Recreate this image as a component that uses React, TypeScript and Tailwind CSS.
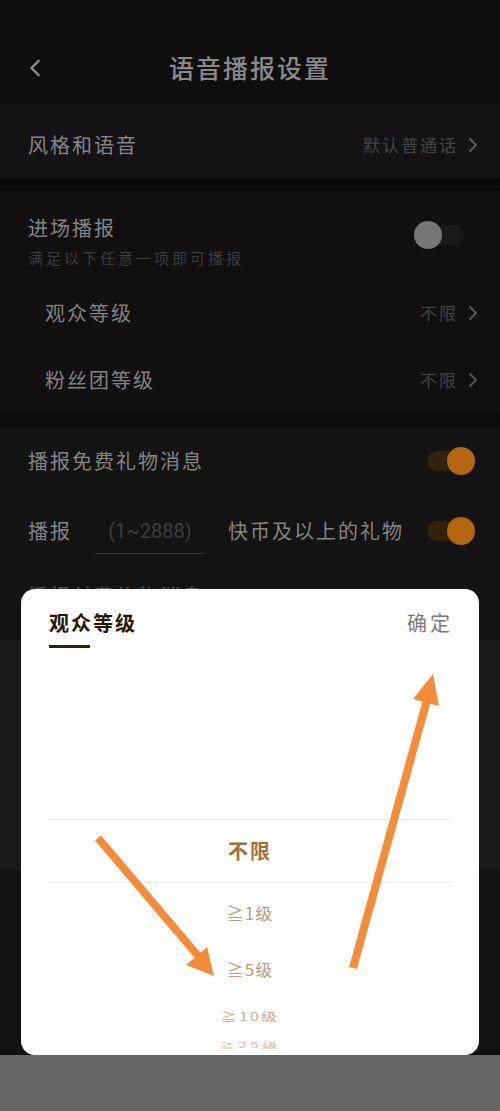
import React from "react";

const font = { fontFamily: '"Noto Sans CJK SC", "Noto Sans", sans-serif' };

function Chevron({ cls }: { cls: string }) {
  return (
    <svg width="10" height="16" viewBox="0 0 10 16" className={cls}>
      <path d="M2 2 L8 8 L2 14" fill="none" stroke="currentColor" strokeWidth="2" strokeLinecap="round" strokeLinejoin="round" />
    </svg>
  );
}

function ToggleOn() {
  return (
    <div className="relative w-[50px] h-[28px] flex items-center">
      <div className="ml-[2px] w-[40px] h-[20px] rounded-full bg-[#33210f]" />
      <div className="absolute right-0 top-0 w-[28px] h-[28px] rounded-full bg-[#b4660f]" />
    </div>
  );
}

function ToggleOff() {
  return (
    <div className="relative w-[52px] h-[28px] flex items-center">
      <div className="ml-[10px] w-[40px] h-[20px] rounded-full bg-[#1a1819]" />
      <div className="absolute left-0 top-0 w-[28px] h-[28px] rounded-full bg-[#767676]" />
    </div>
  );
}

export default function App() {
  return (
    <div style={font} className="relative w-[500px] h-[1111px] overflow-hidden bg-[#121212]">
      {/* Header */}
      <div className="h-[102px] bg-[#100d0f] relative flex items-start justify-center pt-[47px]">
        <Chevron cls="absolute left-[29px] top-[58px] text-[#8a8a8a] rotate-180 w-[12px] h-[20px]" />
        <div className="text-[25px] leading-[40px] text-[#8a8a8a] font-medium tracking-[2px]">语音播报设置</div>
      </div>
      {/* Style and voice */}
      <div className="h-[76px] bg-[#141214] flex items-center justify-between pl-[28px] pr-[22px] pt-[10px]">
        <div className="text-[20px] text-[#858585] tracking-[2px]">风格和语音</div>
        <div className="flex items-center gap-[10px] text-[17px] text-[#444] tracking-[2px]">
          <span>默认普通话</span>
          <Chevron cls="text-[#5a5a5a]" />
        </div>
      </div>
      <div className="h-[12px] bg-[#0b090a]" />
      {/* Entrance broadcast */}
      <div className="bg-[#110f10] flex flex-col">
        <div className="flex items-start justify-between pl-[28px] pr-[34px] pt-[24px]">
          <div className="flex flex-col">
            <div className="text-[20px] leading-[28px] text-[#858585] tracking-[2px]">进场播报</div>
            <div className="text-[15px] leading-[24px] mt-[4px] text-[#3c3c3c] tracking-[3px]">满足以下任意一项即可播报</div>
          </div>
          <div className="mt-[7px]">
            <ToggleOff />
          </div>
        </div>
        <div className="h-[67px] mt-[9px] shrink-0 flex items-center justify-between pl-[45px] pr-[22px]">
          <div className="text-[20px] text-[#838383] tracking-[2px]">观众等级</div>
          <div className="flex items-center gap-[10px] text-[17px] text-[#434343] tracking-[2px]">
            <span>不限</span>
            <Chevron cls="text-[#555]" />
          </div>
        </div>
        <div className="h-[67px] shrink-0 flex items-center justify-between pl-[45px] pr-[22px]">
          <div className="text-[20px] text-[#838383] tracking-[2px]">粉丝团等级</div>
          <div className="flex items-center gap-[10px] text-[17px] text-[#434343] tracking-[2px]">
            <span>不限</span>
            <Chevron cls="text-[#555]" />
          </div>
        </div>
      </div>
      <div className="h-[13px] bg-[#0d0b0c]" />
      {/* Gifts */}
      <div className="bg-[#131313] flex flex-col">
        <div className="h-[70px] flex items-center justify-between pl-[28px] pr-[25px]">
          <div className="text-[20px] text-[#858585] tracking-[2px]">播报免费礼物消息</div>
          <ToggleOn />
        </div>
        <div className="h-[70px] flex items-center pl-[28px] pr-[25px]">
          <div className="text-[20px] text-[#858585] tracking-[2px]">播报</div>
          <div className="ml-[23px] w-[110px] h-[46px] border-b border-[#343434] flex items-center justify-center text-[20px] text-[#3d3d3d]" style={{ fontFamily: '"Roboto", "Noto Sans", sans-serif' }}>
            (1~2888)
          </div>
          <div className="ml-[23px] text-[20px] text-[#858585] tracking-[2px]">快币及以上的礼物</div>
          <div className="ml-auto">
            <ToggleOn />
          </div>
        </div>
        <div className="h-[24px] overflow-hidden flex items-start pl-[28px] pt-[16px]">
          <div className="text-[20px] leading-[28px] text-[#555] tracking-[2px]">播报付费礼物消息</div>
        </div>
      </div>
      <div className="h-[50px] bg-[#131313]" />
      <div className="h-[230px] bg-[#1a1a1a]" />

      {/* Overlay: modal sheet + bottom bar */}
      <div className="absolute inset-0 flex flex-col justify-end">
        <div className="mx-[21px] h-[466px] bg-white rounded-[14px] flex flex-col relative overflow-hidden">
          <div className="flex items-start justify-between pl-[28px] pr-[26px] pt-[19px]">
            <div className="flex flex-col">
              <div className="text-[20px] leading-[30px] font-bold text-[#2a1607] tracking-[2px]">观众等级</div>
              <div className="mt-[7px] w-[41px] h-[3px] bg-[#3a1d05]" />
            </div>
            <div className="text-[20px] leading-[30px] text-[#7a7a7a] tracking-[3px]">确定</div>
          </div>
          <div className="mt-[171px] mx-[27px] border-t border-b border-[#ececec] h-[65px] flex items-center justify-center text-[20px] font-bold text-[#a66d3c] tracking-[2px]">
            不限
          </div>
          <div className="flex flex-col items-center text-[#c4987a]">
            <div className="h-[60px] flex items-center text-[17px] tracking-[1px]">≧1级</div>
            <div className="h-[54px] flex items-center text-[17px] scale-y-[0.92] tracking-[1px]">≧5级</div>
            <div className="h-[38px] flex items-center text-[16px] scale-y-[0.72] text-[#cfa98c] tracking-[2px]">≧10级</div>
            <div className="h-[20px] flex items-center text-[16px] scale-y-[0.45] text-[#d7b9a3] tracking-[3px]">≧25级</div>
          </div>
        </div>
        <div className="h-[56px] bg-[#666666]" />
      </div>

      {/* Annotation arrows */}
      <svg className="absolute inset-0 pointer-events-none" width="500" height="1111" viewBox="0 0 500 1111">
        <line x1="98" y1="838" x2="199" y2="957" stroke="#f48c3a" strokeWidth="8" />
        <polygon points="214,976 186,965 207,947" fill="#f48c3a" />
        <line x1="353" y1="968" x2="427" y2="700" stroke="#f48c3a" strokeWidth="8" />
        <polygon points="433,674 413,699 439,706" fill="#f48c3a" />
      </svg>
    </div>
  );
}
